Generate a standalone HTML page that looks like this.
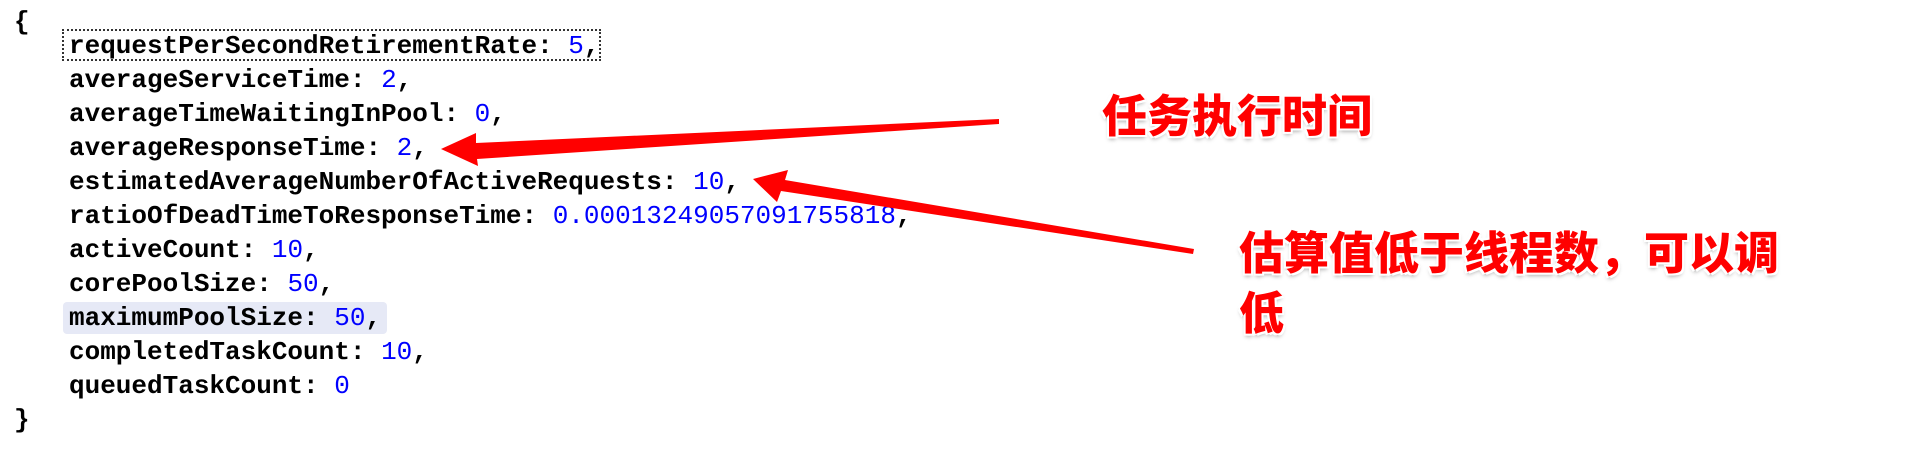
<!DOCTYPE html>
<html><head><meta charset="utf-8">
<style>
html,body{margin:0;padding:0;background:#fff;}
body{width:1910px;height:456px;position:relative;overflow:hidden;font-family:"Liberation Mono",monospace;}
.l{position:absolute;left:69px;font-weight:bold;font-size:26px;line-height:34px;color:#000;white-space:pre;}
.n{color:#0000ff;font-weight:normal;}
.br{position:absolute;left:14px;font-size:26px;line-height:34px;font-weight:bold;}
.box{position:absolute;left:62px;top:29px;width:539px;height:32px;border:2px dotted #333;box-sizing:border-box;}
.hl{position:absolute;left:63px;top:302px;width:324px;height:32px;background:#e6e9f6;border-radius:4px;}
.cn{position:absolute;font-family:"Liberation Sans","Noto Sans CJK SC",sans-serif;font-weight:900;font-size:45px;color:#ff0000;line-height:60px;white-space:nowrap;
 -webkit-text-stroke:0;text-shadow:-2px -2px 0 #fff,2px -2px 0 #fff,-2px 2px 0 #fff,2px 2px 0 #fff,0 3px 4px rgba(0,0,0,.35);}
</style></head><body>
<div class="br" style="top:5px">{</div>
<div class="box"></div>
<div class="hl"></div>
<div class="l" style="top:29px">requestPerSecondRetirementRate: <span class="n">5</span>,</div>
<div class="l" style="top:63px">averageServiceTime: <span class="n">2</span>,</div>
<div class="l" style="top:97px">averageTimeWaitingInPool: <span class="n">0</span>,</div>
<div class="l" style="top:131px">averageResponseTime: <span class="n">2</span>,</div>
<div class="l" style="top:165px">estimatedAverageNumberOfActiveRequests: <span class="n">10</span>,</div>
<div class="l" style="top:199px">ratioOfDeadTimeToResponseTime: <span class="n">0.00013249057091755818</span>,</div>
<div class="l" style="top:233px">activeCount: <span class="n">10</span>,</div>
<div class="l" style="top:267px">corePoolSize: <span class="n">50</span>,</div>
<div class="l" style="top:301px">maximumPoolSize: <span class="n">50</span>,</div>
<div class="l" style="top:335px">completedTaskCount: <span class="n">10</span>,</div>
<div class="l" style="top:369px">queuedTaskCount: <span class="n">0</span></div>
<div class="br" style="top:403px">}</div>
<svg width="1910" height="456" style="position:absolute;left:0;top:0">
<polygon fill="#ff0000" points="441,149 476,133 476,143 999,119 999,124 477,159 478,166"/>
<polygon fill="#ff0000" points="753,179 788,170 785,180 1194,249 1193,254 781,191 777,202"/>
</svg>
<div class="cn" style="left:1102px;top:87px">任务执行时间</div>
<div class="cn" style="left:1239px;top:224px">估算值低于线程数，可以调</div>
<div class="cn" style="left:1239px;top:284px">低</div>
</body></html>
